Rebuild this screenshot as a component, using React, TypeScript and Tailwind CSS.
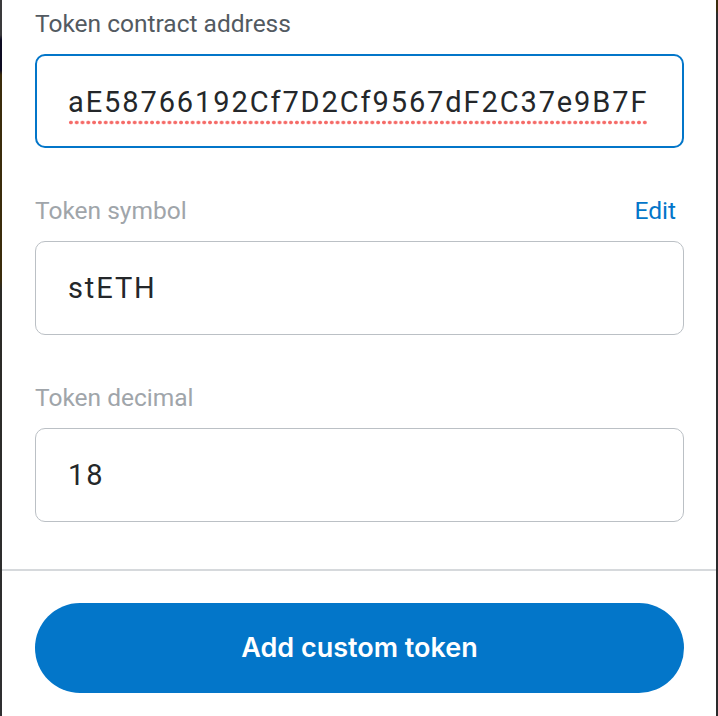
import React from "react";

const labelFont = { fontFamily: "Roboto, 'Liberation Sans', sans-serif" };

function Field({
  label,
  value,
  focused,
  muted,
  action,
  flagged,
}: {
  label: string;
  value: string;
  focused?: boolean;
  muted?: boolean;
  action?: string;
  flagged?: boolean;
}) {
  return (
    <div className="flex flex-col">
      <div className="flex items-center justify-between h-[28px] text-[24.5px] leading-[28px]">
        <span className={muted ? "text-[#a0a5aa]" : "text-[#535a61]"}>{label}</span>
        {action && <button className="text-[#0376c9] pr-[8px]">{action}</button>}
      </div>
      <div
        className={`mt-[16px] h-[94px] rounded-[10px] flex items-center px-[31px] bg-white ${
          focused ? "border-2 border-[#0376c9]" : "border border-[#bbc0c5] pl-[32px]"
        }`}
      >
        <span
          className={`text-[29px] leading-[34px] text-[#24272a] tracking-[1.9px] whitespace-nowrap ${
            flagged
              ? "inline-block pb-[6px] mt-[8px] bg-[radial-gradient(circle,#f56b68_1.5px,transparent_2.2px)] bg-[length:5.8px_5px] bg-repeat-x bg-[position:0_100%]"
              : ""
          }`}
        >
          {value}
        </span>
      </div>
    </div>
  );
}

export default function App() {
  return (
    <div className="w-[718px] h-[716px] flex overflow-hidden" style={labelFont}>
      <div className="w-[2px] bg-[linear-gradient(to_bottom,#3a3a3c_0px,#3a3a3c_35px,#0d0b22_40px,#0d0b22_70px,#3b2c0c_75px,#3b2c0c_280px,#2b2a26_290px,#2f2f31_716px)]" />
      <div className="flex-1 bg-white flex flex-col">
        <div className="flex flex-col gap-[49px] pt-[10px] pb-[47px] pl-[33px] pr-[32px]">
          <Field
            label="Token contract address"
            value="aE58766192Cf7D2Cf9567dF2C37e9B7F"
            focused
            flagged
          />
          <Field label="Token symbol" value="stETH" muted action="Edit" />
          <Field label="Token decimal" value="18" muted />
        </div>
        <div className="h-[2px] bg-[#d6d9dc]" />
        <div className="pt-[32px] pl-[33px] pr-[32px]">
          <button
            className="w-full h-[90px] rounded-full bg-[#0376c9] text-white text-[27px] font-semibold"
            style={{ fontFamily: "Inter, 'Liberation Sans', sans-serif" }}
          >
            Add custom token
          </button>
        </div>
      </div>
      <div className="w-[2px] bg-[linear-gradient(to_bottom,#3b2c0c_0px,#3b2c0c_10px,#2a2a2c_14px,#2a2a2c_716px)]" />
    </div>
  );
}
